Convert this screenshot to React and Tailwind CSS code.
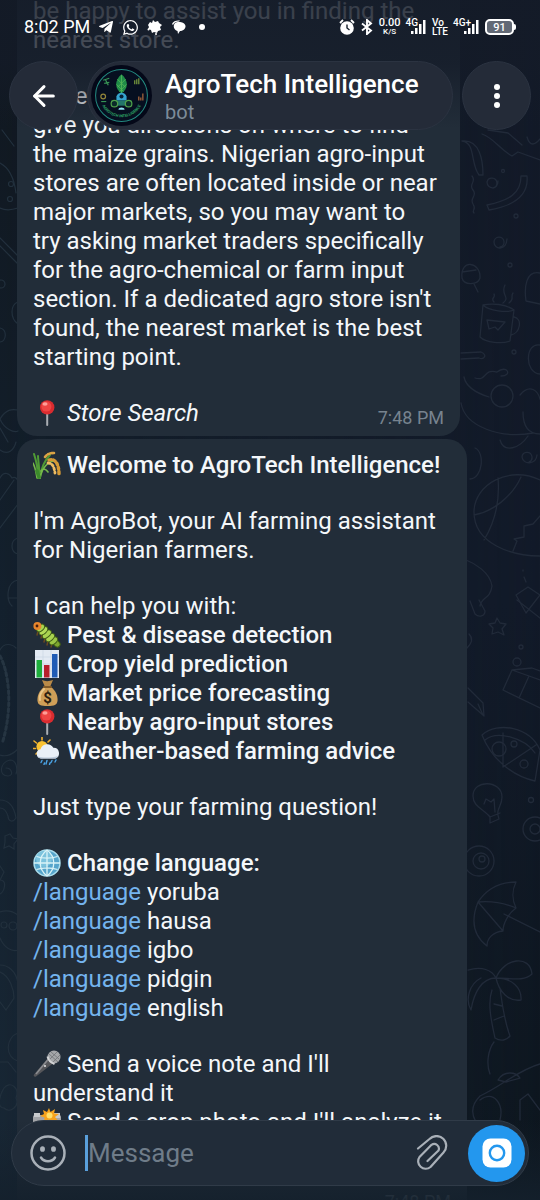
import React from 'react';
import { ArrowLeft } from 'lucide-react';
import { FaTelegramPlane, FaWhatsapp } from 'react-icons/fa';

const emojiClass = 'inline-block h-7 w-7 align-[-6px] mr-1.5';

const Pin = () => (
  <svg viewBox="0 0 28 28" className={emojiClass} role="img" aria-label="Pin">
    <rect x="13.2" y="14" width="2" height="13" rx="1" fill="#a9adb3" />
    <circle cx="14.2" cy="8.4" r="7.2" fill="#d92b2f" />
    <circle cx="13.4" cy="7.6" r="5" fill="#ee4544" />
    <ellipse cx="12" cy="5" rx="2.6" ry="1.8" fill="#ff9d97" />
  </svg>
);

const Rice = () => (
  <svg viewBox="0 0 28 28" className={emojiClass} role="img" aria-label="Rice" fill="none" strokeLinecap="round">
    <path d="M5 27C5 18 3 9 1 3M6 27C7 17 5 10 5 5M7 27C8 18 10 11 17 4" stroke="#4f9a35" strokeWidth="2" />
    <path d="M4 27C3 20 2 16 0 12M7 27C9 17 15 10 22 10M8 20C10 17 13 18 15 21" stroke="#76b94b" strokeWidth="1.6" />
    <path d="M12 6C14 3 17 2 21 2" stroke="#dca345" strokeWidth="2.6" strokeDasharray="2.4 1.6" />
    <path d="M16 9C22 7 26 13 26 23" stroke="#d59a35" strokeWidth="3.4" strokeDasharray="2.2 2.2" />
    <path d="M15 12C19 12 21 15 22 22" stroke="#efbd62" strokeWidth="2.8" strokeDasharray="2 2.2" />
    <path d="M4 20L6 26" stroke="#3c8a2c" strokeWidth="3.6" />
  </svg>
);

const Bug = () => (
  <svg viewBox="0 0 28 28" className={emojiClass} role="img" aria-label="Caterpillar">
    <path d="M5 10l-1 4M9 14l-1 3M12 17l-1 4M15 20l-1 4M19 23l-1 3" stroke="#6d4a20" strokeWidth="1.4" strokeLinecap="round" />
    <g stroke="#3f5c16" strokeWidth="1">
      <ellipse cx="23.5" cy="22.5" rx="3" ry="4" transform="rotate(-48 23.5 22.5)" fill="#7da52f" />
      <ellipse cx="20.5" cy="19.8" rx="3" ry="4.8" transform="rotate(48 20.5 19.8)" fill="#9cc646" />
      <ellipse cx="17.2" cy="16.6" rx="3" ry="5.2" transform="rotate(48 17.2 16.6)" fill="#a9d350" />
      <ellipse cx="13.8" cy="13.2" rx="3" ry="5.4" transform="rotate(48 13.800 13.200)" fill="#a9d350" />
      <ellipse cx="10.4" cy="9.800" rx="3" ry="5.2" transform="rotate(48 10.4 9.8)" fill="#b3dc58" />
      <ellipse cx="7.6" cy="7" rx="3" ry="4.600" transform="rotate(48 7.6 7)" fill="#a9d350" />
    </g>
    <circle cx="4.4" cy="5" r="4" fill="#e8862c" />
    <circle cx="4" cy="5" r="1.400" fill="#4a1d0c" />
  </svg>
);

const BarChart = () => (
  <svg viewBox="0 0 28 28" className={emojiClass} role="img" aria-label="Bar chart">
    <rect x="2" y="0" width="24" height="28" fill="#e3eaf3" />
    <path d="M2 7h24M2 14h24M2 21h24M10 0v28M18 0v28" stroke="#c7d3e2" strokeWidth="0.600" />
    <rect x="3.500" y="10" width="5.500" height="17.500" fill="#1fae3c" />
    <rect x="11" y="15" width="5.500" height="12.500" fill="#b81f2c" />
    <rect x="19" y="4" width="5.500" height="23.500" fill="#1f5bb5" />
  </svg>
);

const MoneyBag = () => (
  <svg viewBox="0 0 28 28" className={emojiClass} role="img" aria-label="Money bag">
    <path d="M9 1c3 1.500 7 1.500 11 0l-3 7h-5z" fill="#b98a48" />
    <path d="M11 8h7c5 4 7 9 6.500 14-.5 4-3 5-10 5s-9.500-1-10-5C4 17 6 12 11 8z" fill="#cf9f58" />
    <path d="M11 10c-3 3-5 7-4 11" stroke="#ebc68a" strokeWidth="2" fill="none" strokeLinecap="round" />
    <rect x="10" y="7" width="9" height="2" rx="1" fill="#805a29" />
    <text x="14.500" y="23.500" textAnchor="middle" fontSize="15" fontWeight="700" fill="#2c2010" fontFamily="Roboto, sans-serif">$</text>
  </svg>
);

const Weather = () => (
  <svg viewBox="0 0 28 28" className={emojiClass} role="img" aria-label="Sun behind rain cloud">
    <path d="M9 0v3M1 4l2.500 2M0 11.500h2.500M17 3l-2 2M3 17l1.500-1.500" stroke="#f3b02c" strokeWidth="1.600" strokeLinecap="round" />
    <circle cx="9" cy="9.500" r="5.600" fill="#fbc231" />
    <path d="M8 21.500a4.700 4.700 0 0 1-.5-9.300 7 7 0 0 1 12.800-1.400 5.500 5.500 0 0 1 2 10.700z" fill="#e9eff7" />
    <path d="M5 19.500c4 1.500 14 1.500 20-.5-1 2-2 2.500-3 2.500H8c-1.500 0-2.500-1-3-2z" fill="#b9c8da" />
    <path d="M9 23.500l-1 2M14 23.500l-1 3.500M19 23.500l-1 2M23 23l-1 2M11.500 26l-.5 1.500M17 26l-.5 1.500" stroke="#4aa4e6" strokeWidth="1.400" strokeLinecap="round" />
  </svg>
);

const Globe = () => (
  <svg viewBox="0 0 28 28" className={emojiClass} role="img" aria-label="Globe" fill="none">
    <circle cx="14" cy="14" r="13" fill="#56a5cb" stroke="#a9dcec" strokeWidth="1.500" />
    <circle cx="11" cy="10" r="8" fill="#7cc3dd" />
    <path d="M14 1v26M1 14h26M3.500 7.500c6 2 15 2 21 0M3.500 20.500c6-2 15-2 21 0" stroke="#d9f3f7" strokeWidth="1.300" />
    <path d="M14 1c-9 7-9 19 0 26M14 1c9 7 9 19 0 26" stroke="#d9f3f7" strokeWidth="1.300" />
  </svg>
);

const Microphone = () => (
  <svg viewBox="0 0 28 28" className={emojiClass} role="img" aria-label="Microphone">
    <path d="M15 8l5.500 5L3 26.500c-1.500 1-3-.5-2-2z" fill="#55565a" />
    <path d="M15.500 9L3 24" stroke="#8b8c90" strokeWidth="1.500" />
    <circle cx="21" cy="7" r="6.500" fill="#a5a7aa" />
    <path d="M16 4l9 8M18 2l8 7M16 10l8-8M19 13l8-8" stroke="#707276" strokeWidth="0.800" />
    <path d="M14.500 6.500c1 4 3 6 7 7.500" stroke="#d3d4d6" strokeWidth="2" fill="none" />
    <circle cx="12" cy="16" r="1" fill="#e4e4e4" />
  </svg>
);

const FlashCamera = () => (
  <svg viewBox="0 0 28 28" className={emojiClass} role="img" aria-label="Camera with flash">
    <rect x="0" y="7" width="28" height="19" rx="2" fill="#a3a5a9" />
    <rect x="0" y="14" width="28" height="9" fill="#333539" />
    <rect x="1" y="5" width="6" height="4" fill="#c8cacd" />
    <rect x="20" y="5" width="7" height="5" fill="#c8cacd" />
    <circle cx="14" cy="17.500" r="6.500" fill="#17191d" stroke="#a9abae" strokeWidth="1.500" />
    <path d="M16 0l1.500 4L22 1l-1 4.500 5 .5-4 3 3 3.500-5-.5L18 15l-2.500-3.500L11 14l.5-4.500L7 8l4-2-1-4 4 2z" fill="#f6a21c" />
    <circle cx="16.500" cy="7.500" r="3" fill="#ffe06a" />
  </svg>
);

const helpItems = [
  { icon: <Bug />, label: 'Pest & disease detection' },
  { icon: <BarChart />, label: 'Crop yield prediction' },
  { icon: <MoneyBag />, label: 'Market price forecasting' },
  { icon: <Pin />, label: 'Nearby agro-input stores' },
  { icon: <Weather />, label: 'Weather-based farming advice' },
];

const languages = ['yoruba', 'hausa', 'igbo', 'pidgin', 'english'];

// Line drawings scattered over the chat wallpaper
const Wallpaper = () => (
  <div className="absolute inset-0 bg-linear-to-b from-[#131a28] via-[#121a29] to-[#0d161e]">
    <div className="absolute inset-0 bg-linear-to-b from-[#10171f] via-[#13202d] to-[#182735] [mask-image:linear-gradient(to_right,black,transparent)]" />
    <svg
      className="absolute top-0 right-0 h-[1200px] w-[100px]"
      viewBox="440 0 100 1200"
      fill="none"
      stroke="#212a39"
      strokeWidth="1.3"
      strokeLinecap="round"
      strokeLinejoin="round"
    >
      <path d="M482 134c12 4 16 14 30 22l6-4 22 8M488 130l20 3 14 12M527 137c3 10 8 8 13 2" />
      <path d="M462 141c14 2 8 22 17 34h4c0-14-3-36-21-34M472 176c5 6-4 8 1 14s-4 8 0 14-2 6 1 9" />
      <path d="M493 188a5 5 0 1 0-6-6c0 7 11 9 11-1M521 176c0 18-12 24-34 29l2 5c24-4 40-14 38-34zM500 247a5 5 0 1 0-6-5c0 8 12 9 13-3" />
      <circle cx="503" cy="171" r="1.500" />
      <circle cx="516" cy="216" r="2" />
      <circle cx="510" cy="265" r="2" />
      <circle cx="514" cy="352" r="2" />
      <path d="M462 278c-2-20 19-16 18 0-2 7-16 8-18 0zM474 284l4 8M462 272l14-2" />
      <path d="M483 305l-3 32c6 6 22 7 30 4l4-31c-8-6-22-7-31-5zm0 0c6 6 24 8 31 5M514 317c9 2 6 16-3 18M487 320l18 2-7 8-3-3-6 2zM494 302c-4-4 2-4 0-8M503 303c8-6-3-8 2-18M509 303c6-4 1-6 4-10" />
      <path d="M540 273c-14-3-16 14-14 28l14 3M540 345c-15-3-16 28 0 29M461 353l20-1c7 3 3 8-2 6l-18 1" />
      <circle cx="502" cy="396" r="11" />
      <path d="M461 403c4 24 40 36 72 30M464 377c2 10 12 16 25 20M475 378c12 4 8-10 22-6 10-8 16 4 4 4M500 440c4 14 20 8 28-4M520 395c10-12 18-4 20 4M523 412c0 18 8 22 17 22" />
      <path d="M475 448c10 4 8 30-5 31M529 462a5 5 0 1 0-7-5c1 8 14 8 15-2" />
      <path d="M540 480c-30-15-66 4-66 32 0 32 38 44 66 44M498 478c2 24-3 44-14 62M474 515c18-3 38-18 47-38M513 551l4-10-3-2 10-2v-11l9-2 7-8" />
      <path d="M466 560c8 3 24 12 26 26-2 14-10 10-12 20M516 595l12-8 12 8-14 18zM523 570v1M524 577l2 5" />
      <path d="M470 601l5 13c4 4 10 2 10-3l-6-11M517 600l23 18" />
      <path d="M497 618l3 5 6 1-4 5 2 6-6-3-6 2 1-6-4-4 6-1zM469 634c5 5 2 10-2 14" />
      <circle cx="521" cy="647" r="2" />
      <circle cx="517" cy="662" r="4" />
      <path d="M503 690l9-20 20-2 8 3M503 690l37 18M512 670l17 6-10 22M529 676l11 4M468 688l15 15 1 13-16-14M478 704l5 11" />
      <path d="M482 735c16-14 48-8 58 15l-5 31c-18-4-42-18-53-46zm3 5c12-10 40-2 50 13M503 733v34M503 767l33-22" />
      <circle cx="499" cy="749" r="7" />
      <circle cx="514" cy="744" r="3" />
      <circle cx="524" cy="764" r="4" />
      <path d="M490 817c-6-8-17-10-17-21 0-17 29-16 29 1 0 10-7 12-3 22l-9 4zM490 817l10-4M484 804l2-5 5 3 3-3 1 13" />
      <circle cx="531" cy="800" r="2.500" />
      <circle cx="535" cy="829" r="12" />
      <circle cx="535" cy="829" r="5" />
      <circle cx="479" cy="861" r="15" />
      <circle cx="481" cy="861" r="8" />
      <circle cx="482" cy="859" r="3" />
      <path d="M478 902c8-12 20-20 38-20-4 8-4 18 0 26-12-5-27-7-38-6zm0 0c-8 20-4 34 9 44 0-8 6-14 16-15 0-8 6-18 13-23M478 902l25 29M504 914l36 18" />
      <path d="M468 970c14-4 24 0 28 8 8-20 34-24 36-4-8 8-22 4-36 4 16 0 26 10 25 22-12 2-22-8-25-22-14 0-22 14-25 32-6-10-2-26 10-32M492 990c-5 14 0 34 3 48 6 4 12 2 15-2-6-16-8-32-10-48M494 1004l8 2M494 1020l10-4" />
      <path d="M494 1042c-6 8-8 22-4 32M540 1064c-22 6-38 22-60 32-8 8-10 16-4 26M498 1080c6-10 18-8 22-2l-14 4zM480 1100c14-10 24 4 20 20M520 1120v-20l8-6 12 16" />
    </svg>
    <svg
      className="absolute top-0 left-0 h-[1200px] w-5"
      viewBox="0 0 20 1200"
      fill="none"
      stroke="#22303d"
      strokeWidth="1.2"
      strokeLinecap="round"
    >
      <path d="M2 130l12 16M0 163c8 4 14 14 16 30M0 208c6 3 12 2 18 0M0 238l18 18M0 246l18 18M18 302c-8 3-8 16 0 22M0 328c8 2 6 14 0 14" />
      <circle cx="11" cy="184" r="2.500" />
      <circle cx="10" cy="199" r="2.500" />
      <circle cx="1" cy="284" r="4" />
      <path d="M0 419c6-10 12-10 18-9M0 419c4 10 14 14 18 12M0 428l8 14M0 450c8 6 14 0 16-8M0 478c4-8 10-4 12 0 4-2 6 2 6 4M0 500l14-20M0 528l18-24M18 538c-8 2-8 14 0 16M18 580c-12 2-12 20-6 26M8 598h10" />
      <path d="M0 650c4-8 12-6 16-2" />
      <path d="M0 656c8 14 14 50 2 88" stroke="#263542" strokeWidth="3" strokeDasharray="3 3" />
      <path d="M0 755c6 2 12 0 18-6M6 768c6 0 8 8 2 8-10 0-8-14 2-16 6 0 8 8 6 14M0 800c8 0 14 6 16 18-4 6-8 2-8-2-2-6-4-8-8-8M5 836l5-2 3 4 5 1-4 5v5l-5-3-5 2 1-6z" />
      <path d="M0 866l4 6-4 8c8 0 4 12 0 14M0 912c8-3 14 0 18 3M0 938c4 10 12 14 18 12M0 965c8 0 16 6 18 18M0 972c10 4 14 18 14 26l-8 12-6-8M18 1033c-12 4-14 24 0 28M0 1062h8l8 10" />
      <circle cx="4" cy="925" r="3" />
      <circle cx="13" cy="926" r="4" />
      <path d="M4 1088c6-8 16 0 12 10 4 8-6 16-12 10-8 0-4-14 0-20z" />
    </svg>
  </div>
);

const AgroLogo = () => (
  <svg viewBox="0 0 60 60" className="h-[61px] w-[61px] shrink-0" role="img" aria-label="AgroTech Intelligence">
    <circle cx="30" cy="30" r="30" fill="#040818" />
    <circle cx="30" cy="30" r="25.500" fill="#060f20" stroke="#238a80" strokeWidth="1" />
    <path d="M30 9c7 6 7 14 0 19-7-5-7-13 0-19z" fill="#1f8c48" />
    <path d="M30 10v18M26 14l8 8M25 19l7 7M34 14l-8 8M35 19l-7 7" stroke="#58b85a" strokeWidth="0.800" />
    <path d="M25 31c1-5 9-5 10 0v4H25z" fill="#35a4d0" />
    <circle cx="30" cy="31" r="2" fill="#082338" />
    <path d="M20 35h20v5H20z" fill="#23766a" />
    <circle cx="23" cy="38" r="3.200" fill="#0b2b2a" stroke="#4fa14a" strokeWidth="1.200" />
    <circle cx="37" cy="38" r="3.200" fill="#0b2b2a" stroke="#4fa14a" strokeWidth="1.200" />
    <path d="M12 15l6-2M13 18l5-1M14 14l3 6" stroke="#389455" strokeWidth="1.200" />
    <path d="M43 19v-4M45 19v-5M47 19v-6" stroke="#6f8f3c" strokeWidth="1.300" />
    <circle cx="12" cy="31" r="2.300" fill="none" stroke="#93863a" strokeWidth="1.200" />
    <path d="M10 36h5" stroke="#3aa35b" />
    <path d="M47 35v-4M49 35v-3M51 35v-7" stroke="#a0623a" strokeWidth="1.300" />
    <path d="M27 44c0-3 6-3 6 0z" fill="#8ee1ef" />
    <path id="logo-arc" d="M11 40a21.500 21.500 0 0 0 38 0" fill="none" />
    <text fontSize="3.800" fontWeight="700" fill="#2fa867" fontFamily="Roboto, sans-serif">
      <textPath href="#logo-arc" startOffset="50%" textAnchor="middle">AGROTECH INTELLIGENCE</textPath>
    </text>
  </svg>
);

const SignalBars = () => (
  <svg viewBox="0 0 17 16" className="h-4 w-[17px]" fill="#fff" aria-hidden="true">
    <rect x="1" y="12" width="2.500" height="3" />
    <rect x="5" y="9" width="2.500" height="6" />
    <rect x="9" y="5" width="2.500" height="10" />
    <rect x="13" y="1" width="2.500" height="14" />
  </svg>
);

const StatusBar = () => (
  <div className="flex h-[54px] items-center justify-between px-6 text-white">
    <div className="flex items-center gap-2">
      <span className="text-lg leading-none">8:02 PM</span>
      <FaTelegramPlane className="h-4 w-4" />
      <FaWhatsapp className="h-[17px] w-[17px]" />
      <svg viewBox="0 0 16 16" className="h-4 w-4" fill="#fff" aria-hidden="true">
        <path d="M3 3l2 1 1-3 2 2 3-1 1 2 3 2-2 2 1 3-3 1-1 2-3-1-2 1-1-3-3-1 1-2-1-2z" />
        <circle cx="1.500" cy="10.500" r="1" />
        <circle cx="9" cy="15" r="1" />
      </svg>
      <svg viewBox="0 0 16 16" className="h-4 w-4" fill="#fff" aria-hidden="true">
        <path d="M1 5c1-3 5-4 8-3.500l-1 1C5 2.500 3 3.500 2 6z" />
        <path d="M4 4c3-2 10-1 10.500 3 .3 3-3 5-5.500 5l-2 3-.5-3C3 11 1.500 7 4 4z" />
      </svg>
      <span className="ml-1 h-[6px] w-[6px] rounded-full bg-white" />
    </div>
    <div className="flex items-center gap-[5px] font-medium">
      <svg viewBox="0 0 16 16" className="h-4 w-4" fill="none" stroke="#fff" aria-hidden="true">
        <circle cx="8" cy="9" r="6.800" fill="#fff" stroke="none" />
        <path d="M1 4l3-3M15 4l-3-3" strokeWidth="1.800" />
        <path d="M8 5.500V9l2.500 2" stroke="#17202d" strokeWidth="1.400" />
      </svg>
      <svg viewBox="0 0 14 16" className="h-4 w-[14px]" fill="none" stroke="#fff" strokeWidth="1.900" aria-hidden="true">
        <path d="M2 4.500l9 7-4 3.500V1l4 3.500-9 7" />
      </svg>
      <div className="flex flex-col items-center leading-none">
        <span className="text-[11px] leading-[10px]">0.00</span>
        <span className="text-[8px] leading-[8px]">K/S</span>
      </div>
      <div className="flex items-center">
        <span className="-mr-2 self-start text-[10px] leading-[8px]">4G</span>
        <SignalBars />
      </div>
      <div className="flex flex-col text-[10px] leading-[9px]">
        <span>Vo</span>
        <span>LTE</span>
      </div>
      <div className="flex items-center">
        <span className="-mr-2 self-start text-[10px] leading-[8px]">4G+</span>
        <SignalBars />
      </div>
      <div className="flex items-center">
        <div className="flex h-4 w-[29px] items-center justify-center rounded-[5px] border-2 border-white bg-[#626975] text-[11px] leading-none">
          91
        </div>
        <span className="h-[6px] w-[2px] rounded-r bg-white" />
      </div>
    </div>
  </div>
);

const Header = () => (
  <header className="absolute inset-x-0 top-0">
    <StatusBar />
    <div className="flex gap-[9px] px-[9px] pt-[7px]">
      <button
        type="button"
        aria-label="Back"
        className="flex h-[69px] w-[69px] shrink-0 items-center justify-center rounded-full border border-[#2b3341] bg-[#242b38]"
      >
        <ArrowLeft className="h-8 w-8 text-white" strokeWidth={2.25} />
      </button>
      <div className="flex h-[69px] min-w-0 flex-1 items-center gap-[13px] rounded-full border border-[#2b3341] bg-[#242b38] pl-[3px]">
        <AgroLogo />
        <div className="min-w-0">
          <h1 className="truncate text-[26px] leading-8 font-medium text-white">AgroTech Intelligence</h1>
          <p className="text-xl leading-6 text-[#7d8b99]">bot</p>
        </div>
      </div>
      <button
        type="button"
        aria-label="More options"
        className="flex h-[69px] w-[69px] shrink-0 flex-col items-center justify-center gap-[3px] rounded-full border border-[#2b3341] bg-[#242b38]"
      >
        <span className="h-[6px] w-[6px] rounded-full bg-white" />
        <span className="h-[6px] w-[6px] rounded-full bg-white" />
        <span className="h-[6px] w-[6px] rounded-full bg-white" />
      </button>
    </div>
  </header>
);

const Composer = () => (
  <form className="absolute inset-x-[11px] bottom-[14px] flex h-[66px] items-center rounded-full border border-[#303b48] bg-[#212c39] pr-[3px] pl-[18px]">
    <button type="button" aria-label="Emoji">
      <svg viewBox="0 0 36 36" className="h-9 w-9" fill="none" stroke="#a9b0b8" strokeWidth="2.500" strokeLinecap="round">
        <circle cx="18" cy="18" r="16.500" />
        <path d="M11 22.500c3 5 11 5 14 0" />
        <ellipse cx="12.500" cy="14" rx="1.200" ry="1.600" fill="#a9b0b8" />
        <ellipse cx="23.500" cy="14" rx="1.200" ry="1.600" fill="#a9b0b8" />
      </svg>
    </button>
    <span className="ml-[19px] h-9 w-[3px] bg-[#5aa0dc]" />
    <input
      type="text"
      aria-label="Message"
      placeholder="Message"
      className="min-w-0 flex-1 bg-transparent text-[26px] text-white outline-none placeholder:text-[#6f7c89]"
    />
    <button type="button" aria-label="Attach file" className="mr-5">
      <svg
        viewBox="0 0 32 36"
        className="h-9 w-8"
        fill="none"
        stroke="#a9b0b8"
        strokeWidth="2.200"
        strokeLinecap="round"
        strokeLinejoin="round"
      >
        <path d="M2 13.500L13.500 4A9.700 9.700 0 0 1 27.500 17.500L14.500 32A7.500 7.500 0 0 1 3.500 22L15.500 9.800A4.700 4.700 0 0 1 22.500 15.500L11.500 26" />
      </svg>
    </button>
    <button
      type="button"
      aria-label="Record video"
      className="flex h-[57px] w-[57px] shrink-0 items-center justify-center rounded-full bg-[#2397ee]"
    >
      <svg viewBox="0 0 30 30" className="h-[30px] w-[30px]">
        <rect x="0.500" y="0.500" width="29" height="29" rx="8" fill="#fff" />
        <circle cx="15" cy="15" r="7.200" fill="#fff" stroke="#2397ee" strokeWidth="2.400" />
      </svg>
    </button>
  </form>
);

const App = () => {
  return (
    <div className="relative h-screen overflow-hidden bg-[#121a28] font-['Roboto',sans-serif]">
      <Wallpaper />

      <main className="relative -mt-[3px] flex flex-col gap-[3px] pl-[17px] text-2xl leading-[29px] text-[#f4f7fa]">
        <article className="mr-20 flex flex-col gap-[27px] rounded-b-[20px] bg-[#222d39] px-4 pb-2">
          <p>
            be happy to assist you in finding the
            <br />
            nearest store.
          </p>
          <p>
            I&apos;ll be able to
            <br />
            give you directions on where to find the maize grains. Nigerian agro-input stores are often located
            inside or near
            <br />
            major markets, so you may want to
            <br />
            try asking market traders specifically for the agro-chemical or farm input section. If a dedicated
            agro store isn&apos;t found, the nearest market is the best starting point.
          </p>
          <div className="flex items-end justify-between">
            <p className="italic">
              <Pin />
              Store Search
            </p>
            <time className="text-lg leading-5 text-[#77838f]">7:48 PM</time>
          </div>
        </article>

        <article className="mr-[73px] flex flex-col gap-[27px] rounded-t-[20px] bg-[#222d39] px-4 pt-3 pb-2">
          <h2 className="font-medium whitespace-nowrap">
            <Rice />
            Welcome to AgroTech Intelligence!
          </h2>
          <p>I&apos;m AgroBot, your AI farming assistant for Nigerian farmers.</p>
          <div>
            <p>I can help you with:</p>
            <ul className="font-medium">
              {helpItems.map((item) => (
                <li key={item.label}>
                  {item.icon}
                  {item.label}
                </li>
              ))}
            </ul>
          </div>
          <p>Just type your farming question!</p>
          <div>
            <h3 className="font-medium">
              <Globe />
              Change language:
            </h3>
            <ul>
              {languages.map((language) => (
                <li key={language}>
                  <a href="#language" className="text-[#74b4ee]">/language</a> {language}
                </li>
              ))}
            </ul>
          </div>
          <div>
            <p>
              <Microphone />
              Send a voice note and I&apos;ll understand it
            </p>
            <p className="whitespace-nowrap">
              <FlashCamera />
              Send a crop photo and I&apos;ll analyze it
            </p>
          </div>
          <time className="mt-7 self-end text-lg leading-5 text-[#77838f]">7:48 PM</time>
        </article>
      </main>

      {/* Fades behind the floating bars */}
      <div className="pointer-events-none absolute inset-x-0 top-0 h-32 bg-linear-to-b from-[#141b28]/85 via-[#141b28]/75 to-transparent" />
      <div className="pointer-events-none absolute inset-x-0 bottom-0 h-20 bg-linear-to-b from-transparent to-[#14202c]/90" />

      <Header />
      <Composer />
    </div>
  );
};

export default App;
